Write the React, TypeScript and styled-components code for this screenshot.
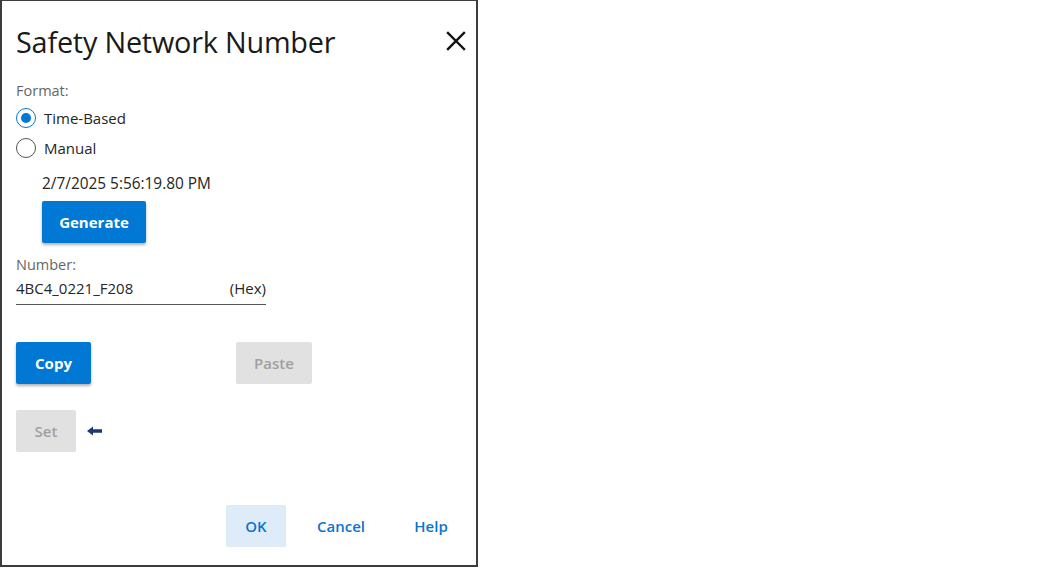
import React, { useState } from 'react'
import styled, { createGlobalStyle } from 'styled-components'

const GlobalStyle = createGlobalStyle`
    html, body {
        margin: 0;
        padding: 0;
        background: #ffffff;
    }
    body {
        font-family: 'Open Sans', 'Noto Sans', sans-serif;
        color: #1f1f1f;
    }
`

const Dialog = styled.div`
    box-sizing: border-box;
    width: 478px;
    height: 567px;
    border: 2px solid #3c3c3c;
    border-top-width: 1px;
    padding: 0 8px 0 14px;
    display: flex;
    flex-direction: column;
    background: #ffffff;
`

const Header = styled.div`
    display: flex;
    align-items: center;
    justify-content: space-between;
    height: 80px;
`

const Title = styled.h1`
    margin: 0;
    font-weight: 400;
    font-size: 28.8px;
    letter-spacing: -0.2px;
    color: #1a1a1a;
`

const CloseButton = styled.button`
    border: none;
    background: none;
    padding: 0;
    width: 24px;
    height: 24px;
    display: flex;
    align-items: center;
    justify-content: center;
    cursor: pointer;
`

const Label = styled.div`
    font-size: 14.5px;
    color: #666666;
    line-height: 20px;
`

const RadioGroup = styled.div`
    display: flex;
    flex-direction: column;
    gap: 10px;
    margin-top: 7px;
`

const RadioRow = styled.label`
    display: flex;
    align-items: center;
    gap: 8px;
    font-size: 15px;
    color: #262626;
    cursor: pointer;
    height: 20px;
`

const RadioCircle = styled.span<{checked: boolean}>`
    box-sizing: border-box;
    width: 20px;
    height: 20px;
    border-radius: 50%;
    border: 1.6px solid ${props => props.checked ? '#0078d4' : '#555555'};
    display: flex;
    align-items: center;
    justify-content: center;
    &::after {
        content: '';
        width: 10px;
        height: 10px;
        border-radius: 50%;
        background: ${props => props.checked ? '#0078d4' : 'transparent'};
    }
`

const TimeBlock = styled.div`
    padding-left: 26px;
    margin-top: 16px;
    display: flex;
    flex-direction: column;
    align-items: flex-start;
`

const Stamp = styled.div`
    font-size: 15.4px;
    color: #262626;
    line-height: 20px;
`

const Button = styled.button<{variant: 'primary' | 'disabled' | 'soft' | 'link'}>`
    box-sizing: border-box;
    height: 42px;
    padding: 0 16px;
    border: none;
    border-radius: 2px;
    font-family: 'Open Sans', 'Noto Sans', sans-serif;
    font-size: 15px;
    font-weight: ${props => props.variant === 'primary' ? 700 : 600};
    cursor: ${props => props.variant === 'disabled' ? 'default' : 'pointer'};
    background: ${props =>
        props.variant === 'primary' ? '#0078d4'
        : props.variant === 'disabled' ? '#e1e1e1'
        : props.variant === 'soft' ? '#deecf9'
        : 'transparent'};
    color: ${props =>
        props.variant === 'primary' ? '#ffffff'
        : props.variant === 'disabled' ? '#a0a0a0'
        : '#0a74d0'};
    box-shadow: ${props => props.variant === 'primary' ? '0 2px 3px rgba(0, 0, 0, 0.3)' : 'none'};
`

const GenerateButton = styled(Button)`
    margin-top: 7px;
    width: 104px;
`

const NumberSection = styled.div`
    margin-top: 12px;
    width: 250px;
`

const NumberField = styled.div`
    display: flex;
    justify-content: space-between;
    align-items: center;
    height: 24px;
    padding-bottom: 4px;
    border-bottom: 1px solid #555555;
    font-size: 15px;
    color: #262626;
    margin-top: 1px;
`

const ClipRow = styled.div`
    display: grid;
    grid-template-columns: 220px 76px;
    margin-top: 37px;
`

const SetRow = styled.div`
    display: flex;
    align-items: center;
    gap: 11px;
    margin-top: 26px;
`

const Footer = styled.div`
    margin-top: auto;
    margin-bottom: 18px;
    display: flex;
    justify-content: flex-end;
    gap: 13px;
    padding-right: 2px;
`

const App: React.FC = () => {
    const [format, setFormat] = useState<'time' | 'manual'>('time')
    return (
        <>
            <GlobalStyle />
            <Dialog>
                <Header>
                    <Title>Safety Network Number</Title>
                    <CloseButton aria-label="Close">
                        <svg width="20" height="20" viewBox="0 0 20 20">
                            <path d="M2 2 L18 18 M18 2 L2 18" stroke="#111" strokeWidth="2.4" strokeLinecap="square" />
                        </svg>
                    </CloseButton>
                </Header>
                <Label>Format:</Label>
                <RadioGroup>
                    <RadioRow onClick={() => setFormat('time')}>
                        <RadioCircle checked={format === 'time'} />
                        Time-Based
                    </RadioRow>
                    <RadioRow onClick={() => setFormat('manual')}>
                        <RadioCircle checked={format === 'manual'} />
                        Manual
                    </RadioRow>
                </RadioGroup>
                <TimeBlock>
                    <Stamp>2/7/2025 5:56:19.80 PM</Stamp>
                    <GenerateButton variant="primary">Generate</GenerateButton>
                </TimeBlock>
                <NumberSection>
                    <Label>Number:</Label>
                    <NumberField>
                        <span>4BC4_0221_F208</span>
                        <span>(Hex)</span>
                    </NumberField>
                </NumberSection>
                <ClipRow>
                    <Button variant="primary" style={{width: 75}}>Copy</Button>
                    <Button variant="disabled">Paste</Button>
                </ClipRow>
                <SetRow>
                    <Button variant="disabled" style={{width: 60}}>Set</Button>
                    <svg width="16" height="10" viewBox="0 0 16 10">
                        <path d="M0 5 L6 0.5 L6 3.3 L15 3.3 L15 6.7 L6 6.7 L6 9.5 Z" fill="#1a3a6e" />
                    </svg>
                </SetRow>
                <Footer>
                    <Button variant="soft" style={{width: 60}}>OK</Button>
                    <Button variant="link" style={{width: 84}}>Cancel</Button>
                    <Button variant="link" style={{width: 70}}>Help</Button>
                </Footer>
            </Dialog>
        </>
    )
}

export default App
